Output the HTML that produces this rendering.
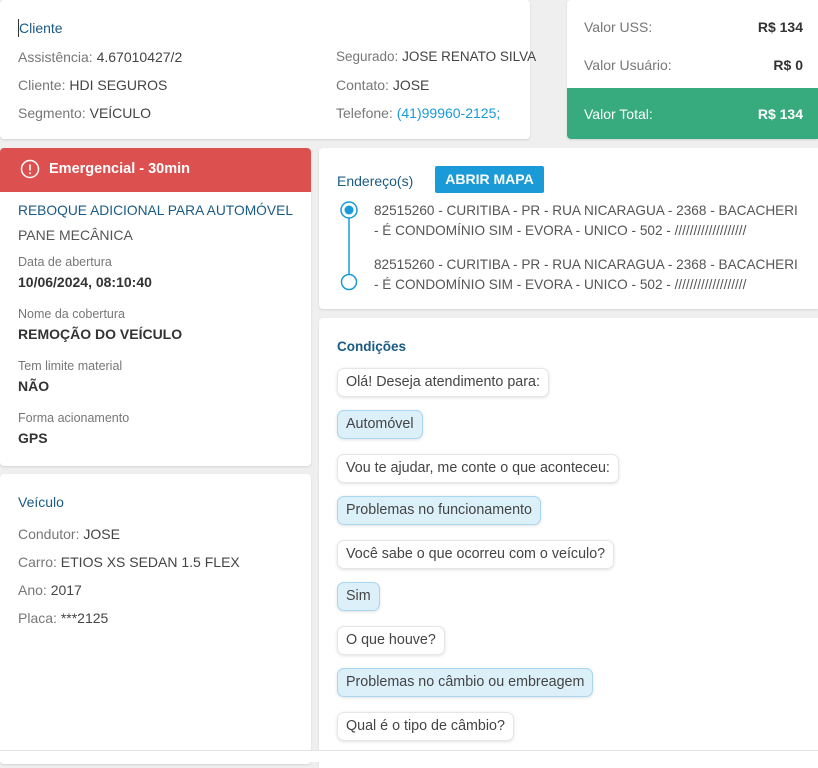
<!DOCTYPE html>
<html><head><meta charset="utf-8"><style>
*{margin:0;padding:0;box-sizing:border-box}
body{width:818px;height:762px;background:#efefef;font-family:"Liberation Sans",sans-serif;font-size:14px;color:#333;position:relative;overflow:hidden}
.a{position:absolute;white-space:nowrap}
.card{position:absolute;background:#fff;border-radius:4px;box-shadow:0 1px 2px rgba(0,0,0,.12)}
.g{color:#777}
.t{color:#1a5b85;font-size:14px}
.lbl{color:#777;font-size:12.5px}
.b{font-weight:bold;color:#333}
.bub{position:absolute;left:337px;height:29px;line-height:27px;padding:0 8px;border:1px solid #e6e6e6;border-radius:7px;background:#fff;box-shadow:0 1px 3px rgba(0,0,0,.12);font-size:14.3px;color:#444;white-space:nowrap}
.bub.u{background:#dcf0fa;border-color:#a8d7ef}
</style></head><body>
<div class="card" style="left:0;top:0;width:530px;height:139px"></div>
<div style="position:absolute;left:18px;top:19px;width:1px;height:18px;background:#333"></div>
<div class="a t" style="left:19px;top:20px">Cliente</div>
<div class="a g" style="left:18px;top:49px">Assistência: <span style="color:#444">4.67010427/2</span></div>
<div class="a g" style="left:18px;top:77px">Cliente: <span style="color:#444">HDI SEGUROS</span></div>
<div class="a g" style="left:18px;top:105px">Segmento: <span style="color:#444">VEÍCULO</span></div>
<div class="a g" style="left:336px;top:49px;font-size:13.5px">Segurado: <span style="color:#444">JOSE RENATO SILVA</span></div>
<div class="a g" style="left:336px;top:77px">Contato: <span style="color:#444">JOSE</span></div>
<div class="a g" style="left:336px;top:105px">Telefone: <span style="color:#1a9ad6">(41)99960-2125;</span></div>

<div class="card" style="left:567px;top:0;width:251px;height:139px;border-radius:4px 0 0 4px;overflow:hidden">
<div style="position:absolute;left:0;top:88px;width:251px;height:51px;background:#37aa7e"></div></div>
<div class="a g" style="left:584px;top:19px">Valor USS:</div>
<div class="a b" style="right:15px;top:19px">R$ 134</div>
<div class="a g" style="left:584px;top:57px">Valor Usuário:</div>
<div class="a b" style="right:15px;top:57px">R$ 0</div>
<div class="a" style="left:584px;top:106px;color:#fff">Valor Total:</div>
<div class="a" style="right:15px;top:106px;color:#fff;font-weight:bold">R$ 134</div>

<div class="card" style="left:0;top:148px;width:311px;height:318px;overflow:hidden">
<div style="height:44px;background:#dc5050"></div></div>
<svg class="a" style="left:20px;top:159px" width="20" height="20" viewBox="0 0 20 20"><circle cx="10" cy="10" r="8.5" fill="none" stroke="#fff" stroke-width="1.5"/><line x1="10" y1="5.5" x2="10" y2="11.5" stroke="#fff" stroke-width="1.6"/><circle cx="10" cy="14.2" r="1" fill="#fff"/></svg>
<div class="a" style="left:49px;top:161px;color:#fff;font-weight:bold;font-size:14.5px">Emergencial - 30min</div>
<div class="a" style="left:18px;top:203px;color:#1a5b85;font-size:13.8px">REBOQUE ADICIONAL PARA AUTOMÓVEL</div>
<div class="a" style="left:18px;top:227px;color:#555">PANE MECÂNICA</div>
<div class="a lbl" style="left:18px;top:255px">Data de abertura</div>
<div class="a b" style="left:18px;top:274px">10/06/2024, 08:10:40</div>
<div class="a lbl" style="left:18px;top:307px">Nome da cobertura</div>
<div class="a b" style="left:18px;top:326px">REMOÇÃO DO VEÍCULO</div>
<div class="a lbl" style="left:18px;top:359px">Tem limite material</div>
<div class="a b" style="left:18px;top:378px">NÃO</div>
<div class="a lbl" style="left:18px;top:411px">Forma acionamento</div>
<div class="a b" style="left:18px;top:430px">GPS</div>

<div class="card" style="left:0;top:474px;width:311px;height:290px"></div>
<div class="a t" style="left:18px;top:494px">Veículo</div>
<div class="a g" style="left:18px;top:526px">Condutor: <span style="color:#444">JOSE</span></div>
<div class="a g" style="left:18px;top:554px">Carro: <span style="color:#444">ETIOS XS SEDAN 1.5 FLEX</span></div>
<div class="a g" style="left:18px;top:582px">Ano: <span style="color:#444">2017</span></div>
<div class="a g" style="left:18px;top:610px">Placa: <span style="color:#444">***2125</span></div>

<div class="card" style="left:319px;top:148px;width:499px;height:161px;border-radius:4px 0 0 4px"></div>
<div class="a t" style="left:337px;top:173px">Endereço(s)</div>
<div class="a" style="left:435px;top:166px;width:109px;height:27px;background:#1a9ad6;border-radius:2px;color:#fff;font-weight:bold;font-size:14px;line-height:27px;text-align:center">ABRIR MAPA</div>
<svg class="a" style="left:338px;top:199px" width="22" height="92"><line x1="11" y1="12" x2="11" y2="78" stroke="#1a9ad6" stroke-width="1.5"/><circle cx="11" cy="11" r="8" fill="#fff" stroke="#1a9ad6" stroke-width="1.5"/><circle cx="11" cy="11" r="4.5" fill="#1a9ad6"/><circle cx="11" cy="83" r="7.5" fill="#fff" stroke="#1a9ad6" stroke-width="1.5"/></svg>
<div class="a" style="left:374px;top:201px;color:#555;font-size:13.6px;line-height:20px">82515260 - CURITIBA - PR - RUA NICARAGUA - 2368 - BACACHERI<br>- É CONDOMÍNIO SIM - EVORA - UNICO - 502 - ///////////////////</div>
<div class="a" style="left:374px;top:255px;color:#555;font-size:13.6px;line-height:20px">82515260 - CURITIBA - PR - RUA NICARAGUA - 2368 - BACACHERI<br>- É CONDOMÍNIO SIM - EVORA - UNICO - 502 - ///////////////////</div>

<div class="card" style="left:319px;top:318px;width:499px;height:450px;border-radius:4px 0 0 0"></div>
<div class="a t" style="left:337px;top:339px;font-weight:bold;font-size:13.5px">Condições</div>
<div class="bub" style="top:368px">Olá! Deseja atendimento para:</div>
<div class="bub u" style="top:410px">Automóvel</div>
<div class="bub" style="top:454px">Vou te ajudar, me conte o que aconteceu:</div>
<div class="bub u" style="top:496px">Problemas no funcionamento</div>
<div class="bub" style="top:540px">Você sabe o que ocorreu com o veículo?</div>
<div class="bub u" style="top:582px">Sim</div>
<div class="bub" style="top:626px">O que houve?</div>
<div class="bub u" style="top:668px">Problemas no câmbio ou embreagem</div>
<div class="bub" style="top:712px">Qual é o tipo de câmbio?</div>
<div style="position:absolute;left:0;top:750px;width:818px;height:12px;background:#fff;border-top:1px solid #e4e4e4"></div>
</body></html>
